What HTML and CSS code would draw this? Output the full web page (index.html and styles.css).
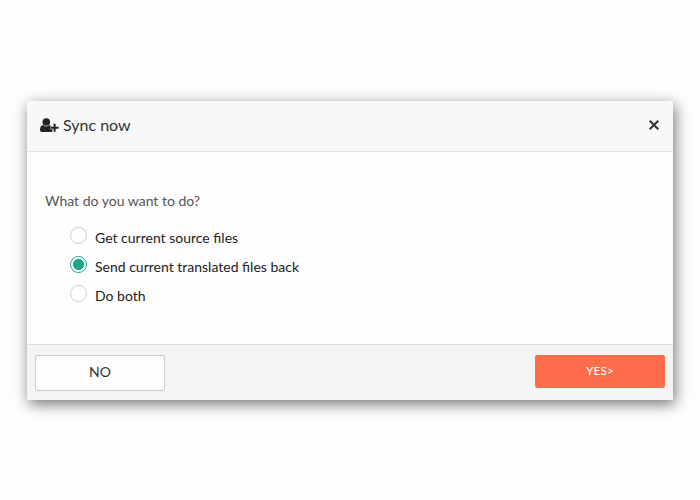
FILE: index.html
```html
<!DOCTYPE html>
<html>

<head>
  <meta charset="utf-8">
  <title>Sync now</title>
  <link rel="stylesheet" href="styles.css">
</head>

<body>
  <form class="modal">
    <div class="modal-header">
      <svg class="user-icon" viewBox="0 0 19 15" width="19" height="15">
        <circle cx="6.3" cy="4" r="3.8" />
        <path d="M3 7Q6.3 9.8 9.6 7Q10.2 7.1 10.8 7.7V8.2H10.3V11.3H12.5V13.2Q12 14 10.5 14H2Q0 14 0 12Q0 7.4 3 7Z" />
        <path d="M13.6 5.7h2v3h3v2h-3v3h-2v-3h-3v-2h3Z" />
      </svg>
      <h1>Sync now</h1>
      <button type="button" class="close" title="Close">
        <svg viewBox="0 0 10 10" width="10" height="10">
          <path d="M0.7 0.7L9.3 9.3M9.3 0.7L0.7 9.3" />
        </svg>
      </button>
    </div>
    <div class="modal-body">
      <p>What do you want to do?</p>
      <label><input type="radio" name="sync">Get current source files</label>
      <label><input type="radio" name="sync" checked>Send current translated files back</label>
      <label><input type="radio" name="sync">Do both</label>
    </div>
    <div class="modal-footer">
      <button type="button" class="no-btn">NO</button>
      <button type="button" class="yes-btn">YES&gt;</button>
    </div>
  </form>
</body>

</html>
```

FILE: styles.css
```css
* {
  box-sizing: border-box;
}

body {
  margin: 0;
  min-height: 500px;
  padding: 101px 27px 0;
  background: #fefefe;
  color: #222;
  font-family: Lato, sans-serif;
  font-size: 14px;
}

.modal {
  width: 646px;
  height: 299px;
  display: flex;
  flex-direction: column;
  background: #fefefe;
  box-shadow: 2px 4px 14px rgba(0, 0, 0, 0.55);
}

.modal-header {
  height: 51px;
  display: flex;
  align-items: center;
  padding: 0 14px 2px 13px;
  background: #f8f8f8;
  border-bottom: 1px solid #e5e5e5;
}

.user-icon {
  margin-right: 4px;
  fill: #222;
}

h1 {
  margin: 0;
  padding-bottom: 2px;
  color: #333;
  font-size: 16px;
  font-weight: normal;
}

.close {
  display: flex;
  margin-left: auto;
  padding: 0;
  border: none;
  background: none;
}

.close path {
  stroke: #333;
  stroke-width: 2;
}

.modal-body {
  flex: 1;
  padding: 40px 18px 0;
}

p {
  margin: 0 0 16px;
  line-height: 18px;
  color: #555;
}

label {
  display: flex;
  height: 29px;
  padding: 2px 0 0 25px;
  line-height: 20px;
}

input {
  appearance: none;
  width: 17px;
  height: 17px;
  margin: -1px 8px 0 0;
  border: 1px solid #ccc;
  border-radius: 50%;
  background: #fff;
}

input:checked {
  border-color: #1aa68b;
  background: radial-gradient(circle, #1aa68b 5px, #fff 6px);
}

.modal-footer {
  height: 56px;
  display: flex;
  justify-content: space-between;
  align-items: flex-start;
  padding: 10px 8px;
  background: #f4f4f4;
  border-top: 1px solid #ddd;
}

.modal-footer button {
  width: 130px;
  font-family: inherit;
}

.no-btn {
  height: 36px;
  padding-bottom: 5px;
  border: 1px solid #ccc;
  border-radius: 2px;
  background: #fefefe;
  color: #333;
  font-size: 14px;
}

.yes-btn {
  height: 33px;
  padding-bottom: 3px;
  border: none;
  border-radius: 2px;
  background: #ff6d4d;
  color: #fff;
  font-size: 12px;
}
```
